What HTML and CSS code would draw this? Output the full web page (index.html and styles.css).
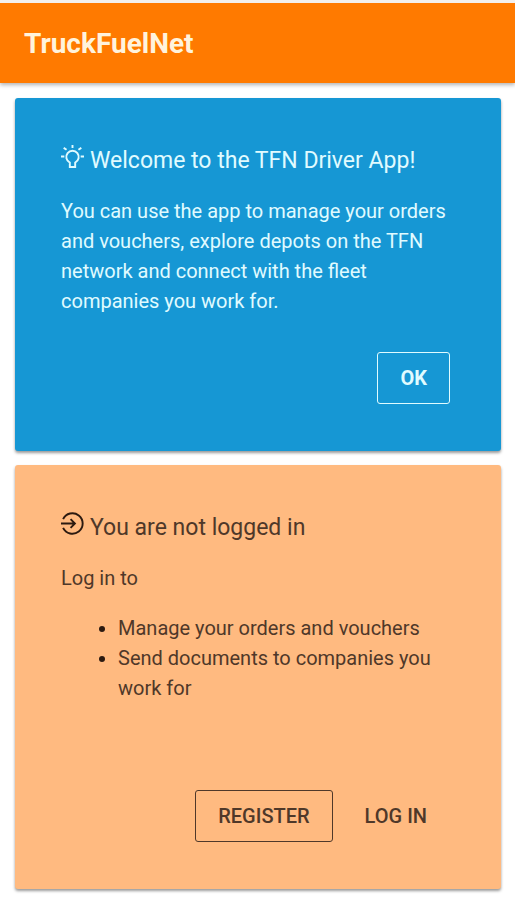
FILE: index.html
```html
<!DOCTYPE html>
<html lang="en">
<head>
    <meta charset="UTF-8">
    <meta name="viewport" content="width=device-width, initial-scale=1.0">
    <title>TruckFuelNet</title>
    <link rel="stylesheet" href="styles.css">
</head>
<body>
    <header class="toolbar">
        <h1>TruckFuelNet</h1>
    </header>

    <main class="cards">
        <section class="card card-welcome">
            <h2>
                <svg class="icon" viewBox="0 0 24 24" aria-hidden="true">
                    <path d="M9.2 23v-4.7a6.5 6.5 0 1 1 5.6 0V23z"/>
                    <path d="M0 12h3.5M20.5 12H24M2.8 3l3 2M21.2 3l-3 2M12 0v3"/>
                </svg>
                Welcome to the TFN Driver App!
            </h2>
            <p>You can use the app to manage your orders and vouchers, explore depots on the TFN network and connect with the fleet companies you work for.</p>
            <div class="actions">
                <button type="button" class="btn btn-outline btn-bold">OK</button>
            </div>
        </section>

        <section class="card card-login">
            <h2>
                <svg class="icon" viewBox="0 0 24 24" aria-hidden="true">
                    <path d="M2.2 7.5a10.7 10.7 0 1 1 0 9"/>
                    <path d="M0 12h14M10 7.5l4.5 4.5-4.5 4.5"/>
                </svg>
                You are not logged in
            </h2>
            <p>Log in to</p>
            <ul>
                <li>Manage your orders and vouchers</li>
                <li>Send documents to companies you work for</li>
            </ul>
            <div class="actions">
                <button type="button" class="btn btn-outline">REGISTER</button>
                <button type="button" class="btn">LOG IN</button>
            </div>
        </section>
    </main>
</body>
</html>
```
FILE: styles.css
```css
* {
    box-sizing: border-box;
}

body {
    margin: 0;
    font-family: Roboto, sans-serif;
    font-size: 20px;
    line-height: 30px;
    color: #4f3829;
    background-color: #fff;
}

.toolbar {
    padding: 25px 24px 23px;
    border-top: 3px solid #f3efec;
    background-color: #ff7a00;
    box-shadow: 0 2px 4px rgba(0, 0, 0, 0.3);
}

.toolbar h1 {
    margin: 0;
    font-size: 28px;
    line-height: 32px;
    font-weight: 700;
    color: #fff3dd;
}

.cards {
    display: flex;
    flex-direction: column;
    gap: 14px;
    padding: 15px 14px 11px 15px;
}

.card {
    padding: 47px 46px;
    border-radius: 3px;
    box-shadow: 0 2px 3px rgba(0, 0, 0, 0.4);
}

.card-welcome {
    color: #e0fbff;
    background-color: #1697d4;
}

.card-login {
    background-color: #ffba80;
}

.card h2 {
    display: flex;
    align-items: baseline;
    gap: 6px;
    margin: 0 0 19px;
    font-size: 23px;
    line-height: 32px;
    font-weight: 400;
}

.card p {
    margin: 0;
}

.card ul {
    margin: 20px 0 51px;
    padding-left: 57px;
}

.card li::marker {
    color: #2c1a10;
}

.icon {
    width: 23px;
    height: 23px;
    flex: none;
    fill: none;
    stroke: currentColor;
    stroke-width: 2;
}

.card-login .icon {
    color: #2c1a10;
}

.actions {
    display: flex;
    justify-content: flex-end;
    gap: 9px;
    padding: 36px 5px 0 0;
}

.btn {
    height: 52px;
    padding: 0 22px;
    border: 1px solid transparent;
    border-radius: 3px;
    font: inherit;
    font-weight: 500;
    color: inherit;
    background: none;
    cursor: pointer;
}

.btn-outline {
    border-color: currentColor;
}

.btn-bold {
    font-weight: 700;
}
```
